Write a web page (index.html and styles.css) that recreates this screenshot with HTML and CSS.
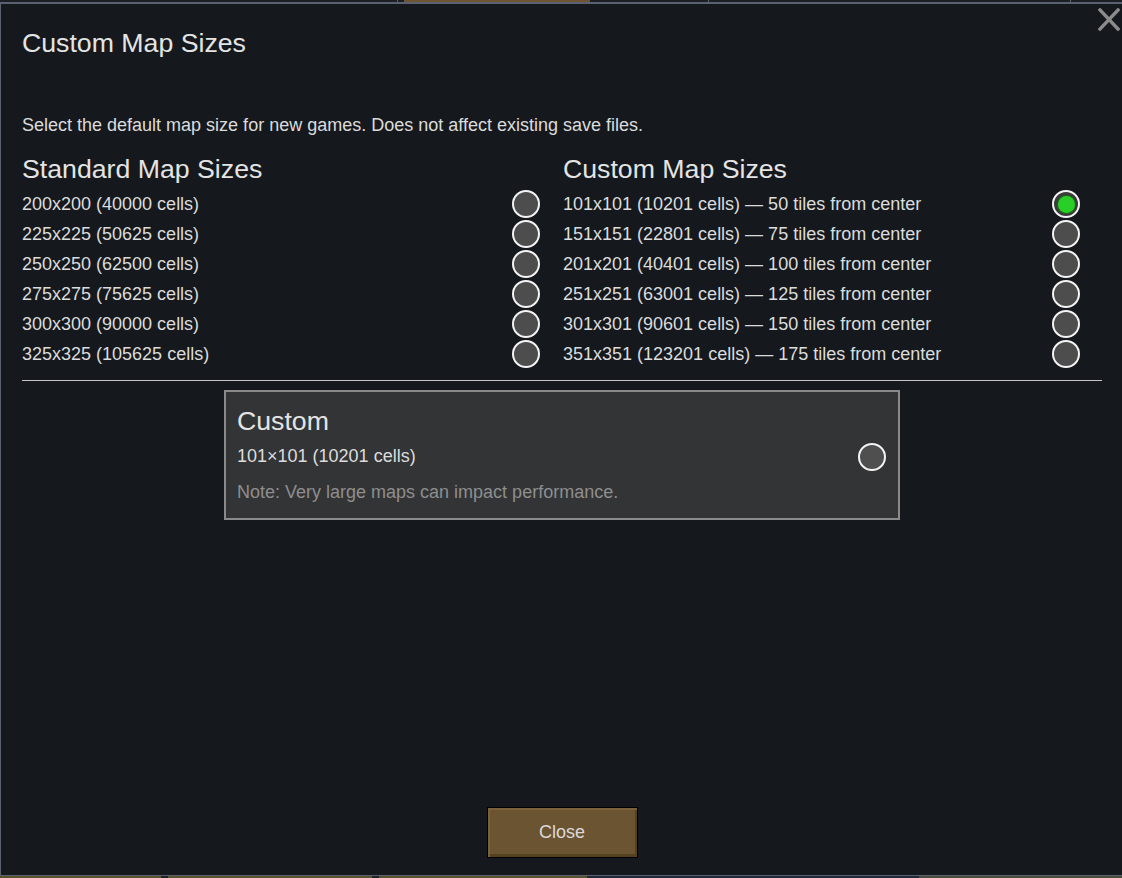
FILE: index.html
```html
<!DOCTYPE html>
<html lang="en">
<head>
<meta charset="utf-8">
<title>Custom Map Sizes</title>
<link rel="stylesheet" href="styles.css">
</head>
<body>
<div class="topbar">
  <span class="seg seg-a"></span>
  <span class="seg seg-div"></span>
  <span class="seg seg-gap"></span>
  <span class="seg seg-brown"></span>
  <span class="seg seg-b"></span>
  <span class="seg seg-div"></span>
  <span class="seg seg-c"></span>
  <span class="seg seg-div"></span>
  <span class="seg seg-d"></span>
</div>
<div class="window">
  <button class="close-x" aria-label="Close">
    <svg width="22" height="23" viewBox="0 0 22 23"><path d="M2 2 L20 21 M20 2 L2 21" stroke="#8b8b8b" stroke-width="3.4" stroke-linecap="square" fill="none"/></svg>
  </button>
  <h1 class="title">Custom Map Sizes</h1>
  <p class="desc">Select the default map size for new games. Does not affect existing save files.</p>
  <div class="columns">
    <div class="col">
      <h2 class="heading">Standard Map Sizes</h2>
      <div class="row"><span>200x200 (40000 cells)</span><span class="radio"></span></div>
      <div class="row"><span>225x225 (50625 cells)</span><span class="radio"></span></div>
      <div class="row"><span>250x250 (62500 cells)</span><span class="radio"></span></div>
      <div class="row"><span>275x275 (75625 cells)</span><span class="radio"></span></div>
      <div class="row"><span>300x300 (90000 cells)</span><span class="radio"></span></div>
      <div class="row"><span>325x325 (105625 cells)</span><span class="radio"></span></div>
    </div>
    <div class="col col-right">
      <h2 class="heading">Custom Map Sizes</h2>
      <div class="row"><span>101x101 (10201 cells) — 50 tiles from center</span><span class="radio selected"></span></div>
      <div class="row"><span>151x151 (22801 cells) — 75 tiles from center</span><span class="radio"></span></div>
      <div class="row"><span>201x201 (40401 cells) — 100 tiles from center</span><span class="radio"></span></div>
      <div class="row"><span>251x251 (63001 cells) — 125 tiles from center</span><span class="radio"></span></div>
      <div class="row"><span>301x301 (90601 cells) — 150 tiles from center</span><span class="radio"></span></div>
      <div class="row"><span>351x351 (123201 cells) — 175 tiles from center</span><span class="radio"></span></div>
    </div>
  </div>
  <hr class="sep">
  <div class="custom-box">
    <h2 class="heading">Custom</h2>
    <div class="custom-row"><span class="custom-value">101×101 (10201 cells)</span><span class="radio radio-box"></span></div>
    <p class="note">Note: Very large maps can impact performance.</p>
  </div>
  <div class="spacer"></div>
  <div class="footer">
    <button class="btn-close">Close</button>
  </div>
</div>
<div class="bottombar">
  <span class="seg b-olive w161"></span>
  <span class="seg b-dark w7"></span>
  <span class="seg b-olive w204"></span>
  <span class="seg b-dark w7"></span>
  <span class="seg b-olive w208"></span>
  <span class="seg b-blue w332"></span>
  <span class="seg b-gray wrest"></span>
</div>
</body>
</html>
```

FILE: styles.css
```css
* { box-sizing: border-box; }
html, body {
  margin: 0;
  padding: 0;
  width: 1122px;
  height: 878px;
  overflow: hidden;
  background: #15191d;
  font-family: "Liberation Sans", Arial, sans-serif;
  color: #dcdcdc;
}

.topbar, .bottombar {
  display: flex;
  height: 2px;
  width: 1122px;
}
.seg { display: block; height: 100%; }
.topbar { background: #1c2026; }
.seg-a { width: 397px; }
.seg-div { width: 1px; background: #5c6472; }
.seg-gap { width: 6px; }
.seg-brown { width: 186px; background: #6e5432; }
.seg-b { width: 118px; }
.seg-c { width: 361px; }
.seg-d { flex: 1; }

.bottombar { background: #1c2026; }
.b-olive { background: #57532f; }
.b-dark { background: #1e2228; }
.b-blue { background: #1f2938; }
.b-gray { background: #4b4d3c; }
.w161 { width: 161px; }
.w7 { width: 7px; }
.w204 { width: 204px; }
.w208 { width: 208px; }
.w332 { width: 332px; }
.wrest { flex: 1; }

.window {
  position: relative;
  height: 874px;
  width: 1122px;
  background: #15191d;
  border-top: 2px solid #5a6270;
  border-left: 1px solid #5a6270;
  border-bottom: 1px solid #5a6270;
  padding: 24px 20px 17px 21px;
  display: flex;
  flex-direction: column;
}

.close-x {
  position: absolute;
  top: 4px;
  right: 2px;
  width: 22px;
  height: 23px;
  padding: 0;
  border: 0;
  background: none;
  line-height: 0;
}

.title, .heading {
  margin: 0;
  font-weight: normal;
  font-size: 26.7px;
  line-height: 30px;
  color: #e4e4e4;
}

.desc {
  margin: 57px 0 0 0;
  font-size: 18px;
  line-height: 20px;
}

.columns {
  margin-top: 19px;
  display: grid;
  grid-template-columns: 540px 540px;
}
.col-right { padding-left: 1px; }
.col .heading { margin-bottom: 5px; }

.row {
  display: flex;
  justify-content: space-between;
  align-items: center;
  height: 30px;
  padding-right: 22px;
  font-size: 18px;
  line-height: 20px;
}
.row > span:first-child { margin-bottom: 1px; }

.radio {
  position: relative;
  display: block;
  width: 28px;
  height: 28px;
  border-radius: 50%;
  border: 2px solid #f4f4f4;
  background: #4d4d4d;
  flex: none;
}
.radio.selected { background: #3b3b3b; }
.radio.selected::after {
  content: "";
  position: absolute;
  left: 3.5px;
  top: 3.5px;
  width: 17px;
  height: 17px;
  border-radius: 50%;
  background: #27cf27;
  box-shadow: 0 0 0 1px #1a6e1a;
}

.sep {
  margin: 11px 0 0 0;
  border: 0;
  height: 1px;
  background: #c4c4c4;
  width: 1080px;
}

.custom-box {
  margin: 9px auto 0 auto;
  width: 676px;
  height: 130px;
  border: 2px solid #8a8a8a;
  background: #333436;
  padding: 14px 12px 0 11px;
}
.custom-row {
  margin-top: 7px;
  height: 28px;
  display: flex;
  justify-content: space-between;
  align-items: center;
}
.custom-value {
  font-size: 18px;
  line-height: 20px;
  margin-bottom: 2px;
}
.radio-box { background: #4f4f4f; }
.note {
  margin: 11px 0 0 0;
  font-size: 18px;
  line-height: 20px;
  color: #8e8e8e;
}

.spacer { flex: 1; }

.footer {
  display: flex;
  justify-content: center;
  width: 1080px;
}
.btn-close {
  width: 151px;
  height: 51px;
  border: 1px solid #000;
  background: #6b5431;
  box-shadow: inset 2px 2px 0 #7a613b, inset -2px -3px 0 #54411f;
  color: #dadada;
  font-family: "Liberation Sans", Arial, sans-serif;
  font-size: 18px;
  padding: 0;
}
```
